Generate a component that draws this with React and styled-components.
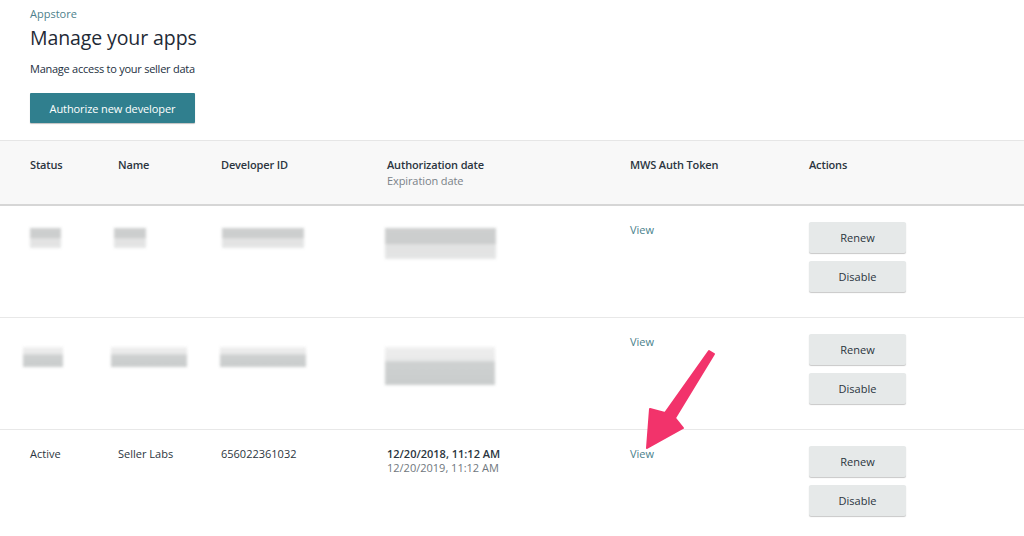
import React from "react";
import styled, { createGlobalStyle } from "styled-components";

const Global = createGlobalStyle`
  html, body { margin: 0; padding: 0; background: #ffffff; }
  body { font-family: "Open Sans", "Noto Sans", Arial, sans-serif; color: #232f3e; }
  * { box-sizing: border-box; }
`;

const Page = styled.div`
  position: relative;
  width: 1024px;
  height: 536px;
  overflow: hidden;
  background: #fff;
`;

const Top = styled.header`
  padding: 7px 30px 0;
  display: flex;
  flex-direction: column;
  align-items: flex-start;
`;

const Crumb = styled.a`
  font-size: 11px;
  line-height: 14px;
  color: #4d7f8c;
  text-decoration: none;
`;

const Title = styled.h1`
  margin: 4px 0 0;
  font-size: 19.5px;
  line-height: 26px;
  font-weight: 400;
  color: #1f2a36;
  letter-spacing: -0.1px;
`;

const Sub = styled.p`
  margin: 11px 0 0;
  font-size: 11px;
  line-height: 14px;
  font-weight: 500;
  color: #232f3e;
  letter-spacing: -0.25px;
`;

const Primary = styled.button`
  margin-top: 17px;
  width: 165px;
  height: 30px;
  border: none;
  border-radius: 1px;
  background: #307f8e;
  color: #fff;
  font-family: inherit;
  font-size: 11px;
  font-weight: 500;
  letter-spacing: -0.1px;
  box-shadow: 0 1px 1px rgba(0, 0, 0, 0.25);
`;

const Table = styled.div`
  margin-top: 17px;
  border-top: 1px solid #e6e6e6;
`;

const cols = "88px 103px 166px 243px 179px 1fr";

const HeadRow = styled.div`
  display: grid;
  grid-template-columns: ${cols};
  padding: 16px 0 0 30px;
  height: 65px;
  background: #f8f8f8;
  border-bottom: 2px solid #d6d6d6;
`;

const Th = styled.div`
  font-size: 11px;
  line-height: 16px;
  font-weight: 600;
  color: #2b3540;
  letter-spacing: -0.15px;
`;

const ThSub = styled.div`
  font-size: 11px;
  line-height: 16px;
  font-weight: 500;
  color: #7a8288;
  letter-spacing: -0.1px;
`;

const Row = styled.div`
  display: grid;
  grid-template-columns: ${cols};
  padding: 16px 0 0 30px;
  height: ${(p) => p.$h}px;
  border-bottom: ${(p) => (p.$last ? "none" : "1px solid #e8e8e8")};
  align-items: start;
`;

const Cell = styled.div`
  font-size: 11px;
  line-height: 16px;
  font-weight: 500;
  color: #2b3540;
`;

const DateMain = styled.div`
  font-size: 11px;
  line-height: 14px;
  font-weight: 600;
  color: #2b3540;
  padding-top: 1px;
`;

const DateSub = styled.div`
  font-size: 11px;
  line-height: 14px;
  font-weight: 500;
  color: #6f777d;
`;

const Link = styled.a`
  font-size: 11px;
  line-height: 16px;
  font-weight: 500;
  color: #4a7f8c;
  text-decoration: none;
`;

const Actions = styled.div`
  display: flex;
  flex-direction: column;
  gap: 8px;
`;

const Btn = styled.button`
  width: 97px;
  height: 31px;
  border: none;
  border-radius: 2px;
  background: #e6e9e9;
  color: #2b3540;
  font-family: inherit;
  font-size: 11px;
  font-weight: 500;
  box-shadow: 0 1px 1px rgba(0, 0, 0, 0.22);
`;

const Blur = styled.div`
  width: ${(p) => p.$w}px;
  height: ${(p) => p.$h}px;
  margin-left: ${(p) => p.$x || 0}px;
  margin-top: ${(p) => p.$y || 0}px;
  background: ${(p) =>
    p.$flip
      ? "linear-gradient(180deg, #eeeeee 0%, #e6e6e6 35%, #c9cccc 40%, #c4c7c7 100%)"
      : "linear-gradient(180deg, #c8caca 0%, #c6c8c8 50%, #dedfdf 52%, #e2e3e3 100%)"};
  filter: blur(1.6px);
  opacity: 0.9;
`;

const Arrow = styled.svg`
  position: absolute;
  left: 0;
  top: 0;
  pointer-events: none;
`;

function Blurs({ items }) {
  return items.map((b, i) => (
    <Cell key={i}>
      <Blur $w={b[0]} $h={b[1]} $x={b[2]} $y={b[3]} $flip={b[4]} />
    </Cell>
  ));
}

function ActionButtons() {
  return (
    <Actions>
      <Btn>Renew</Btn>
      <Btn>Disable</Btn>
    </Actions>
  );
}

export default function App() {
  return (
    <Page>
      <Global />
      <Top>
        <Crumb href="#">Appstore</Crumb>
        <Title>Manage your apps</Title>
        <Sub>Manage access to your seller data</Sub>
        <Primary>Authorize new developer</Primary>
      </Top>
      <Table>
        <HeadRow>
          <Th>Status</Th>
          <Th>Name</Th>
          <Th>Developer ID</Th>
          <div>
            <Th>Authorization date</Th>
            <ThSub>Expiration date</ThSub>
          </div>
          <Th>MWS Auth Token</Th>
          <Th>Actions</Th>
        </HeadRow>
        <Row $h={112}>
          <Blurs
            items={[
              [31, 20, 0, 6],
              [32, 20, -4, 6],
              [82, 20, 1, 6],
              [111, 31, -2, 6],
            ]}
          />
          <Cell>
            <Link href="#">View</Link>
          </Cell>
          <ActionButtons />
        </Row>
        <Row $h={112}>
          <Blurs
            items={[
              [40, 20, -7, 13, true],
              [76, 20, -7, 13, true],
              [86, 20, -1, 13, true],
              [110, 38, -2, 13, true],
            ]}
          />
          <Cell>
            <Link href="#">View</Link>
          </Cell>
          <ActionButtons />
        </Row>
        <Row $h={106} $last>
          <Cell>Active</Cell>
          <Cell>Seller Labs</Cell>
          <Cell>656022361032</Cell>
          <div>
            <DateMain>12/20/2018, 11:12 AM</DateMain>
            <DateSub>12/20/2019, 11:12 AM</DateSub>
          </div>
          <Cell>
            <Link href="#">View</Link>
          </Cell>
          <ActionButtons />
        </Row>
      </Table>
      <Arrow width="1024" height="536" viewBox="0 0 1024 536">
        <polygon
          points="709,351 714,354 675,418 683,428 647,448 650,409 665,413"
          fill="#f2336b"
          stroke="#f2336b"
          strokeWidth="2"
          strokeLinejoin="round"
        />
      </Arrow>
    </Page>
  );
}
